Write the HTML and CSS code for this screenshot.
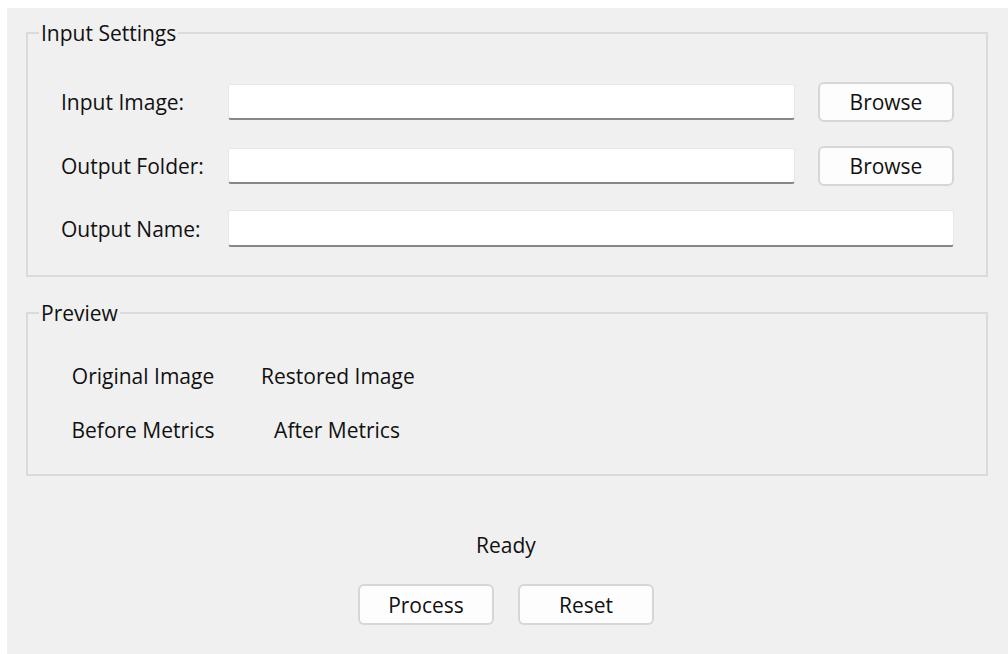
FILE: index.html
```html
<!DOCTYPE html>
<html lang="en">
<head>
<meta charset="utf-8">
<title>Image Restoration</title>
<link rel="stylesheet" href="styles.css">
</head>
<body>
<div class="window">
  <fieldset class="group">
    <legend class="group-title">Input Settings</legend>
    <div class="settings-grid">
      <label class="field-label" for="in-image">Input Image:</label>
      <input class="line-edit" id="in-image" type="text">
      <button class="push-button" type="button">Browse</button>

      <label class="field-label" for="out-folder">Output Folder:</label>
      <input class="line-edit" id="out-folder" type="text">
      <button class="push-button" type="button">Browse</button>

      <label class="field-label" for="out-name">Output Name:</label>
      <input class="line-edit line-edit-wide" id="out-name" type="text">
    </div>
  </fieldset>

  <fieldset class="group group-preview">
    <legend class="group-title">Preview</legend>
    <div class="preview-grid">
      <div class="preview-cell">Original Image</div>
      <div class="preview-cell">Restored Image</div>
      <div class="preview-cell">Before Metrics</div>
      <div class="preview-cell">After Metrics</div>
    </div>
  </fieldset>

  <div class="footer">
    <div class="status">Ready</div>
    <div class="actions">
      <button class="push-button" type="button">Process</button>
      <button class="push-button" type="button">Reset</button>
    </div>
  </div>
</div>
</body>
</html>
```

FILE: styles.css
```css
html, body {
  margin: 0;
  padding: 0;
  background: #ffffff;
}

body {
  font-family: "Open Sans", "Noto Sans", "Liberation Sans", sans-serif;
  font-size: 21px;
  color: #111111;
}

.window {
  margin: 8px 0 0 7px;
  height: 646px;
  box-sizing: border-box;
  padding: 13px 20px 0 19px;
  background: #f0f0f0;
}

/* group boxes */
.group {
  margin: 0;
  padding: 0;
  border: 2px solid #dadada;
  min-width: 0;
}

.group-title {
  margin-left: 11px;
  padding: 0 2px;
  line-height: 24px;
  height: 24px;
}

.group-preview {
  margin-top: 24px;
}

/* settings form */
.settings-grid {
  display: grid;
  grid-template-columns: 144px 1fr 136px;
  grid-template-rows: 40px 40px 37px;
  column-gap: 23px;
  row-gap: 24px;
  align-items: center;
  padding: 37px 32px 28px 33px;
}

.field-label {
  white-space: nowrap;
  line-height: 26px;
}

.line-edit {
  box-sizing: border-box;
  height: 36px;
  width: 100%;
  margin: 0;
  padding: 0 8px;
  font: inherit;
  background: #ffffff;
  border: 1px solid #e8e8e8;
  border-bottom: 2px solid #878787;
  border-radius: 3px;
  outline: none;
}

.line-edit-wide {
  grid-column: 2 / 4;
  height: 37px;
}

.push-button {
  box-sizing: border-box;
  width: 136px;
  height: 40px;
  margin: 0;
  padding: 0;
  font: inherit;
  color: #111111;
  background: #fdfdfd;
  border: 2px solid #d6d6d6;
  border-radius: 6px;
}

/* preview labels */
.preview-grid {
  display: grid;
  grid-template-columns: 144px 152px;
  grid-auto-rows: 30px;
  column-gap: 46px;
  row-gap: 24px;
  padding: 36px 0 29px 43px;
}

.preview-cell {
  text-align: center;
  line-height: 30px;
  white-space: nowrap;
}

/* status and actions */
.footer {
  margin-top: 56px;
  padding-right: 2px;
  display: flex;
  flex-direction: column;
  align-items: center;
}

.status {
  line-height: 26px;
}

.actions {
  margin-top: 26px;
  display: flex;
  gap: 24px;
}

.actions .push-button {
  height: 41px;
}
```
